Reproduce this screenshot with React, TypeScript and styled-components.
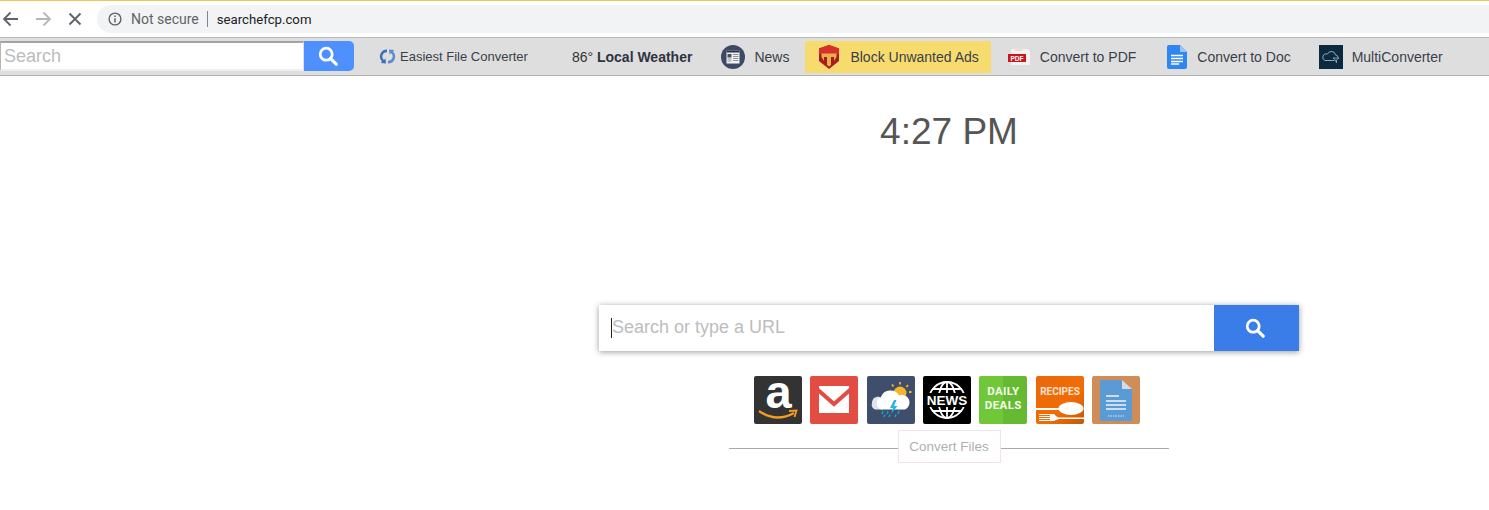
import styled, { createGlobalStyle } from "styled-components";

const Global = createGlobalStyle`
  html, body { margin: 0; padding: 0; background: #fff; overflow: hidden; }
  body { font-family: "Liberation Sans", Arial, sans-serif; }
`;

const Page = styled.div`
  width: 1489px;
  height: 510px;
  overflow: hidden;
`;

// browser chrome
const BrowserBar = styled.div`
  height: 36px;
  border-top: 1px solid #eec45f;
  border-bottom: 1px solid #b9b9b9;
  display: flex;
  align-items: center;
  background: #fff;
`;
const NavIcons = styled.div`
  width: 97px;
  flex: none;
  display: flex;
  align-items: center;
  padding-left: 1px;
  gap: 12px;
  box-sizing: border-box;
`;
const UrlPill = styled.div`
  flex: 1;
  height: 28px;
  background: #f1f3f4;
  border-radius: 14px 0 0 14px;
  display: flex;
  align-items: center;
  padding-left: 11px;
  font-family: Roboto, sans-serif;
`;
const NotSecure = styled.span`
  color: #5f6368;
  font-size: 14px;
  margin-left: 9px;
  padding-right: 8px;
  border-right: 1px solid #80868b;
  line-height: 16px;
`;
const Domain = styled.span`
  color: #202124;
  font-size: 13.2px;
  margin-left: 9px;
`;

// extension toolbar
const Toolbar = styled.div`
  height: 37px;
  background: #dedede;
  border-bottom: 1px solid #b2b2b2;
  display: flex;
  align-items: center;
  font-size: 14px;
  color: #3a3f4a;
`;
const MiniSearch = styled.div`
  display: flex;
  height: 30px;
  flex: none;
  margin-top: -1px;
`;
const MiniInput = styled.input`
  width: 304px;
  height: 30px;
  box-sizing: border-box;
  border: none;
  border-top: 2px solid #a3a3a3;
  border-left: 1px solid #b5b5b5;
  border-bottom: 2px solid #efefef;
  border-right: 1px solid #e0e0e0;
  padding: 1px 0 0 3px;
  outline: none;
  font: 18px "Liberation Sans", Arial, sans-serif;
  background: #fff;
  &::placeholder { color: #bcbcbc; opacity: 1; }
`;
const MiniButton = styled.div`
  width: 50px;
  box-sizing: border-box;
  padding-right: 2px;
  background: #4d90fe;
  border-radius: 0 5px 5px 0;
  display: flex;
  align-items: center;
  justify-content: center;
`;
const ToolItem = styled.div<{ $left: number; $gap?: number; $size?: number; $highlight?: boolean }>`
  display: flex;
  align-items: center;
  flex: none;
  margin-left: ${(p) => p.$left}px;
  gap: ${(p) => p.$gap ?? 9}px;
  font-size: ${(p) => p.$size ?? 14}px;
  white-space: nowrap;
  ${(p) =>
    p.$highlight &&
    `
    background: #f7db6e;
    height: 32px;
    padding: 0 12px 0 13px;
  `}
`;
const Weather = styled.span`
  color: #333;
  b { color: #2f3340; }
`;

// home page content
const Main = styled.main`
  width: 700px;
  margin-left: 599px;
  display: flex;
  flex-direction: column;
  align-items: center;
`;
const Clock = styled.div`
  font-size: 37px;
  line-height: 44px;
  color: #555;
  margin-top: 34px;
`;
const SearchBox = styled.div`
  position: relative;
  width: 700px;
  height: 46px;
  margin-top: 151px;
  display: flex;
  background: #fff;
  box-shadow: 0 1px 6px rgba(0, 0, 0, 0.4);
`;
const SearchInput = styled.input`
  flex: 1;
  border: none;
  outline: none;
  padding: 0 0 2px 13px;
  font: 18px "Liberation Sans", Arial, sans-serif;
  &::placeholder { color: #bdbdbd; opacity: 1; }
`;
const Caret = styled.span`
  position: absolute;
  left: 12px;
  top: 13px;
  width: 1px;
  height: 20px;
  background: #222;
`;
const SearchButton = styled.div`
  width: 85px;
  box-sizing: border-box;
  padding-right: 3px;
  background: #3b7de8;
  display: flex;
  align-items: center;
  justify-content: center;
`;
const Tiles = styled.div`
  display: flex;
  gap: 8.33px;
  margin: 25px 4px 0 0;
`;
const Tile = styled.svg`
  width: 48px;
  height: 48px;
  display: block;
  overflow: visible;
`;
const DealsTile = styled.div`
  width: 48px;
  height: 48px;
  box-sizing: border-box;
  padding-bottom: 2px;
  border-radius: 2px;
  background: linear-gradient(90deg, #70c738 50%, #66b932 50%);
  display: flex;
  flex-direction: column;
  align-items: center;
  justify-content: center;
  font: 700 11.5px/13.6px Roboto, sans-serif;
  letter-spacing: 0.4px;
  color: #f6fbf0;
`;
const ConvertRow = styled.div`
  width: 440px;
  margin-top: 6px;
  display: flex;
  align-items: center;
  &::before, &::after {
    content: "";
    flex: 1;
    height: 1px;
    background: #aaa;
    margin-top: 4px;
  }
`;
const ConvertButton = styled.div`
  width: 103px;
  height: 33px;
  box-sizing: border-box;
  border: 1px solid #f3e2e8;
  display: flex;
  align-items: center;
  justify-content: center;
  font-size: 13.5px;
  color: #b0b0b0;
  background: #fff;
`;

const Magnifier = ({ size }: { size: number }) => (
  <svg width={size} height={size} viewBox="0 0 20 20" fill="none" stroke="#fff">
    <circle cx="8.2" cy="8.2" r="6" strokeWidth="2.8" />
    <path d="M12.6 12.6 L18.2 18.2" strokeWidth="3.2" strokeLinecap="round" />
  </svg>
);

const NavArrow = ({ flip, color }: { flip?: boolean; color: string }) => (
  <svg width="20" height="20" viewBox="0 0 20 20" fill="none" stroke={color} strokeWidth="1.8" style={flip ? { transform: "scaleX(-1)" } : undefined}>
    <path d="M17 10 H3.5 M9.5 3.5 L3 10 L9.5 16.5" />
  </svg>
);

const InfoIcon = () => (
  <svg width="14" height="14" viewBox="0 0 14 14" fill="none" stroke="#5f6368">
    <circle cx="7" cy="7" r="5.9" strokeWidth="1.4" />
    <path d="M7 6.2 V10.4 M7 3.6 V5" strokeWidth="1.5" />
  </svg>
);

const ConverterIcon = () => (
  <svg width="17" height="17" viewBox="0 0 17 17" fill="none">
    <path d="M8 1.5 A7 7 0 0 0 3 13.5 L1.8 15 L7 15.5 L6.4 10.5 L5 12 A4.4 4.4 0 0 1 8 4.2 Z" fill="#3f6fb5" />
    <path d="M9 15.5 A7 7 0 0 0 14 3.5 L15.2 2 L10 1.5 L10.6 6.5 L12 5 A4.4 4.4 0 0 1 9 12.8 Z" fill="#5b8bd0" />
  </svg>
);

const NewsIcon = () => (
  <svg width="24" height="24" viewBox="0 0 24 24">
    <circle cx="12" cy="12" r="12" fill="#3d4a66" />
    <rect x="5.5" y="5.5" width="13" height="13" fill="#f2f2f2" />
    <rect x="5.5" y="5.5" width="13" height="2" fill="#2b3245" />
    <rect x="6.5" y="9" width="4" height="3.5" fill="#4a4f5c" />
    <path d="M12 9.5 H17.5 M12 11.5 H17.5 M12 13.5 H17.5 M12 15.5 H17.5 M6.5 14 H10.5 M6.5 16 H10.5" stroke="#8d929c" strokeWidth="1" />
  </svg>
);

const ShieldIcon = () => (
  <svg width="22" height="24" viewBox="0 0 22 24">
    <path d="M11 0 L21 3.5 V16 L11 24 L1 16 V3.5 Z" fill="#a81c1f" />
    <path d="M11 0 L21 3.5 V9 H1 V3.5 Z" fill="#d5302b" />
    <path d="M3.5 8.5 H18.5 V12 L16 16 V12 H13 V20 L11 21.5 L9 20 V12 H6 V16 L3.5 12 Z" fill="#e8b04a" />
  </svg>
);

const PdfIcon = () => (
  <svg width="23" height="20" viewBox="0 0 23 20">
    <path d="M3 2 H20 L22 5 V18 H3 Z" fill="#f4f1ef" />
    <path d="M7 1 H15 V4 H7 Z" fill="#e3e0dd" />
    <rect x="0" y="7" width="18" height="8" fill="#c9151b" />
    <text x="9" y="13.6" textAnchor="middle" fontSize="6.6" fontWeight="700" fill="#fff" fontFamily="Liberation Sans">PDF</text>
  </svg>
);

const DocIcon = () => (
  <svg width="20" height="24" viewBox="0 0 20 24">
    <path d="M2 0 H13 L20 7 V22 A2 2 0 0 1 18 24 H2 A2 2 0 0 1 0 22 V2 A2 2 0 0 1 2 0 Z" fill="#2f86f0" />
    <path d="M13 0 L20 7 H13 Z" fill="#9cc4f5" />
    <path d="M4 10.5 H16 M4 13.5 H16 M4 16.5 H16 M4 19 H12" stroke="#fff" strokeWidth="1.5" />
  </svg>
);

const CloudIcon = () => (
  <svg width="24" height="24" viewBox="0 0 24 24" fill="none">
    <rect width="24" height="24" fill="#0b2a3f" />
    <path d="M6 15.5 H15.5 M19 12.5 A2.6 2.6 0 0 0 16.5 10 A4.2 4.2 0 0 0 8.5 9 A3.3 3.3 0 0 0 6 15.5" stroke="#9fb4c0" strokeWidth="0.9" />
    <path d="M14 13 H20 L17.5 15 V18 L16.5 15 Z" stroke="#9fb4c0" strokeWidth="0.8" />
  </svg>
);

const AmazonTile = () => (
  <Tile viewBox="0 0 48 48">
    <rect width="48" height="48" rx="2" fill="#333" />
    <text x="24.5" y="32" textAnchor="middle" fontSize="47" fontWeight="700" fill="#fff" fontFamily="Liberation Sans">a</text>
    <path d="M5 35 Q22 47 40 37" fill="none" stroke="#f39c1f" strokeWidth="2.4" />
    <path d="M35 35 L42.5 34.5 L40.5 41" fill="none" stroke="#f39c1f" strokeWidth="1.8" />
  </Tile>
);

const GmailTile = () => (
  <Tile viewBox="0 0 48 48">
    <rect width="48" height="48" rx="2" fill="#e34c42" />
    <rect x="9" y="10" width="30" height="27" fill="#fff" />
    <path d="M7.5 13.5 L24 28 L40.5 13.5" fill="none" stroke="#e34c42" strokeWidth="4" />
  </Tile>
);

const WeatherTile = () => (
  <Tile viewBox="0 0 48 48">
    <rect width="48" height="48" rx="2" fill="#3e4e6b" />
    <circle cx="33" cy="17" r="6.5" fill="#f5b62e" />
    <path d="M33 6 V8.5 M25 8.5 L26.5 10.5 M41 9 L39.5 11 M44.5 16 H42" stroke="#f5b62e" strokeWidth="1.8" />
    <path d="M8 33.5 A5 5 0 0 1 5 27 A6 6 0 0 1 13 21 L16 33.5 Z" fill="#dfe4ea" />
    <path d="M15 33.5 A6.5 6.5 0 0 1 14 21 A10 10 0 0 1 32 19.5 A7 7 0 0 1 38 33.5 Z" fill="#fff" />
    <path d="M27 24 L23 32 H26 L24 38 L30.5 30 H27 L29.5 24 Z" fill="#1fb6ea" />
    <path d="M16 35 L15 38 M21 35 L20 38 M32 35 L31 38 M18 38.5 L17 41 M23 38.5 L22 41 M29 38.5 L28 41" stroke="#1e9ad0" strokeWidth="1.6" />
  </Tile>
);

const NewsTile = () => (
  <Tile viewBox="0 0 48 48">
    <rect width="48" height="48" rx="2" fill="#000" />
    <g fill="none" stroke="#fff" strokeWidth="1.8">
      <circle cx="24" cy="24" r="18" />
      <ellipse cx="24" cy="24" rx="8.5" ry="18" />
      <path d="M24 6 V42 M9 13 H39 M9 35 H39" />
    </g>
    <rect x="2" y="17" width="44" height="14" fill="#000" />
    <text x="24" y="29" textAnchor="middle" fontSize="13.5" fontWeight="700" fill="#fff" fontFamily="Liberation Sans">NEWS</text>
  </Tile>
);

const RecipesTile = () => (
  <Tile viewBox="0 0 48 48">
    <defs>
      <linearGradient id="recipesBg" x1="0" y1="0" x2="1" y2="1">
        <stop offset="0" stopColor="#e8690a" />
        <stop offset="0.6" stopColor="#f26c05" />
        <stop offset="1" stopColor="#c45808" />
      </linearGradient>
    </defs>
    <rect width="48" height="48" rx="2" fill="url(#recipesBg)" />
    <text x="24" y="19" textAnchor="middle" fontFamily="Roboto" fontWeight="700" fontSize="10" fill="#fbe3cf">RECIPES</text>
    <ellipse cx="35" cy="32.5" rx="12.5" ry="6.5" fill="#fff" />
    <rect x="0" y="32" width="26" height="2" fill="#fff" />
    <path d="M3 38.5 H15 M3 40.5 H15 M3 42.5 H15 M3 44.5 H15" stroke="#fff" strokeWidth="1" />
    <path d="M14 38 H18 C19.5 40 21 41 23 41.5 H48 V43 H23 C21 43.5 19.5 44 18 45 H14 Z" fill="#fff" />
  </Tile>
);

const DocTile = () => (
  <Tile viewBox="0 0 48 48">
    <rect width="48" height="48" rx="2" fill="#cf8e58" />
    <path d="M8 4 H30 L40 13 V45 H8 Z" fill="#5a9bd6" />
    <path d="M30 4 L40 13 H30 Z" fill="#d9d9e2" />
    <path d="M14 20 H27 M14 25 H34 M14 29 H34 M14 33 H34" stroke="#eef5fb" strokeWidth="1.5" />
    <path d="M16 40 H32" stroke="#dce9f5" strokeWidth="1" strokeDasharray="1.5 1" />
  </Tile>
);

function App() {
  return (
    <Page>
      <Global />
      <BrowserBar>
        <NavIcons>
          <NavArrow color="#5f6368" />
          <NavArrow flip color="#b5b7ba" />
          <svg width="20" height="20" viewBox="0 0 20 20" fill="none" stroke="#5f6368" strokeWidth="1.9">
            <path d="M4.5 4.5 L15.5 15.5 M15.5 4.5 L4.5 15.5" />
          </svg>
        </NavIcons>
        <UrlPill>
          <InfoIcon />
          <NotSecure>Not secure</NotSecure>
          <Domain>searchefcp.com</Domain>
        </UrlPill>
      </BrowserBar>

      <Toolbar>
        <MiniSearch>
          <MiniInput placeholder="Search" readOnly />
          <MiniButton>
            <Magnifier size={20} />
          </MiniButton>
        </MiniSearch>
        <ToolItem $left={25} $gap={4} $size={13}>
          <ConverterIcon />
          Easiest File Converter
        </ToolItem>
        <ToolItem $left={44}>
          <Weather>
            86° <b>Local Weather</b>
          </Weather>
        </ToolItem>
        <ToolItem $left={29}>
          <NewsIcon />
          News
        </ToolItem>
        <ToolItem $left={16} $gap={10} $highlight>
          <ShieldIcon />
          Block Unwanted Ads
        </ToolItem>
        <ToolItem $left={17}>
          <PdfIcon />
          Convert to PDF
        </ToolItem>
        <ToolItem $left={31} $gap={10}>
          <DocIcon />
          Convert to Doc
        </ToolItem>
        <ToolItem $left={28}>
          <CloudIcon />
          MultiConverter
        </ToolItem>
      </Toolbar>

      <Main>
        <Clock>4:27 PM</Clock>
        <SearchBox>
          <Caret />
          <SearchInput placeholder="Search or type a URL" readOnly />
          <SearchButton>
            <Magnifier size={20} />
          </SearchButton>
        </SearchBox>
        <Tiles>
          <AmazonTile />
          <GmailTile />
          <WeatherTile />
          <NewsTile />
          <DealsTile>
            <span>DAILY</span>
            <span>DEALS</span>
          </DealsTile>
          <RecipesTile />
          <DocTile />
        </Tiles>
        <ConvertRow>
          <ConvertButton>Convert Files</ConvertButton>
        </ConvertRow>
      </Main>
    </Page>
  );
}

export default App;
